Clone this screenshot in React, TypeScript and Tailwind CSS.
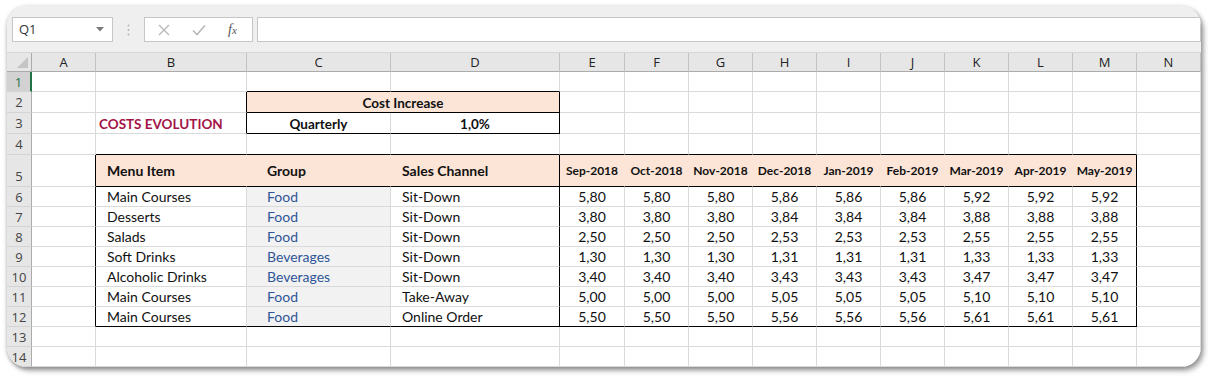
import React from 'react';

const months = ['Sep-2018', 'Oct-2018', 'Nov-2018', 'Dec-2018', 'Jan-2019', 'Feb-2019', 'Mar-2019', 'Apr-2019', 'May-2019'];

const rows: [string, string, string, string[]][] = [
  ['Main Courses', 'Food', 'Sit-Down', ['5,80', '5,80', '5,80', '5,86', '5,86', '5,86', '5,92', '5,92', '5,92']],
  ['Desserts', 'Food', 'Sit-Down', ['3,80', '3,80', '3,80', '3,84', '3,84', '3,84', '3,88', '3,88', '3,88']],
  ['Salads', 'Food', 'Sit-Down', ['2,50', '2,50', '2,50', '2,53', '2,53', '2,53', '2,55', '2,55', '2,55']],
  ['Soft Drinks', 'Beverages', 'Sit-Down', ['1,30', '1,30', '1,30', '1,31', '1,31', '1,31', '1,33', '1,33', '1,33']],
  ['Alcoholic Drinks', 'Beverages', 'Sit-Down', ['3,40', '3,40', '3,40', '3,43', '3,43', '3,43', '3,47', '3,47', '3,47']],
  ['Main Courses', 'Food', 'Take-Away', ['5,00', '5,00', '5,00', '5,05', '5,05', '5,05', '5,10', '5,10', '5,10']],
  ['Main Courses', 'Food', 'Online Order', ['5,50', '5,50', '5,50', '5,56', '5,56', '5,56', '5,61', '5,61', '5,61']],
];

const letters = ['A', 'B', 'C', 'D', 'E', 'F', 'G', 'H', 'I', 'J', 'K', 'L', 'M', 'N'];

// a single sheet cell; border colours are passed in full so they never clash
const Cell: React.FC<{ r?: string; b?: string; className?: string; children?: React.ReactNode }> = ({
  r = 'border-r-[#dadada]',
  b = 'border-b-[#dadada]',
  className = '',
  children,
}) => (
  <div className={`min-h-0 leading-[16px] pt-[1px] border-r border-b ${r} ${b} flex items-center overflow-hidden whitespace-nowrap ${className}`}>
    {children}
  </div>
);

const RowHead: React.FC<{ n: number; active?: boolean; bottom?: boolean }> = ({ n, active, bottom }) => (
  <div
    className={`min-h-0 leading-[16px] flex justify-center border-b border-b-[#d4d4d4] font-['Open_Sans',sans-serif] text-[13px] ${
      active ? 'bg-[#d2d2d2] text-[#217346] border-r-2 border-r-[#217346]' : 'bg-[#e6e6e6] text-[#444] border-r border-r-[#ababab]'
    } ${bottom ? 'items-end pb-[2px]' : 'items-center'}`}
  >
    {n}
  </div>
);

export default function App() {
  return (
    <div className="w-[1208px] h-[376px] bg-white pt-[6px] pl-[7px] font-['Lato',sans-serif] text-[14px] text-[#111]">
      <div className="w-[1194px] h-[361px] rounded-[20px] overflow-hidden bg-white shadow-[0_1px_4px_rgba(0,0,0,0.3),3px_4px_5px_rgba(0,0,0,0.3)]">
        {/* Formula bar */}
        <div className="h-[47px] bg-[#efefef] border-b border-[#d6d6d6] flex items-start pt-[11px] pl-[5px]">
          <div className="w-[101px] h-[25px] bg-white border border-[#c6c6c6] flex items-center justify-between pl-[6px] pr-[8px] font-['Open_Sans',sans-serif] text-[13px] text-[#333]">
            <span>Q1</span>
            <svg width="8" height="5" viewBox="0 0 8 5">
              <path d="M0 0 L8 0 L4 4.5 Z" fill="#7a7a7a" />
            </svg>
          </div>
          <div className="w-[31px] h-[25px] flex items-center justify-center">
            <svg width="3" height="12" viewBox="0 0 3 12">
              <circle cx="1.5" cy="1.5" r="1" fill="#b5b5b5" />
              <circle cx="1.5" cy="6" r="1" fill="#b5b5b5" />
              <circle cx="1.5" cy="10.5" r="1" fill="#b5b5b5" />
            </svg>
          </div>
          <div className="w-[109px] h-[25px] bg-white border border-[#c6c6c6] flex items-center pl-[13px] gap-[22px]">
            <svg width="12" height="12" viewBox="0 0 12 12">
              <path d="M1 1 L11 11 M11 1 L1 11" stroke="#b8b8b8" strokeWidth="1.4" />
            </svg>
            <svg width="14" height="12" viewBox="0 0 14 12">
              <path d="M1 6.5 L5 10.5 L13 1.5" stroke="#b8b8b8" strokeWidth="1.6" fill="none" />
            </svg>
            <span className="font-['Liberation_Serif',serif] italic text-[14px] text-[#555] leading-none">
              f<span className="text-[11px]">x</span>
            </span>
          </div>
          <div className="flex-1 h-[25px] ml-[4px] bg-white border border-[#c6c6c6]" />
        </div>

        {/* Sheet grid */}
        <div className="grid grid-cols-[25px_64px_151px_144px_169px_65px_64px_64px_64px_64px_64px_64px_64px_64px_64px] grid-rows-[19px_20px_21px_21px_21px_32px_20px_20px_20px_20px_20px_20px_20px_20px_20px]">
          {/* column headers */}
          <div className="min-h-0 bg-[#e6e6e6] border-r border-b border-r-[#ababab] border-b-[#ababab] flex items-end justify-end pr-[3px] pb-[3px]">
            <svg width="11" height="11" viewBox="0 0 11 11">
              <path d="M11 0 L11 11 L0 11 Z" fill="#c4c4c4" />
            </svg>
          </div>
          {letters.map((l) => (
            <div
              key={l}
              className="min-h-0 bg-[#e6e6e6] border-r border-b border-r-[#c2c2c2] border-b-[#ababab] flex items-center justify-center font-['Open_Sans',sans-serif] text-[13px] leading-[16px] text-[#222]"
            >
              {l}
            </div>
          ))}

          {/* row 1 */}
          <RowHead n={1} active />
          {letters.map((l) => (
            <Cell key={l} b={l === 'C' || l === 'D' ? 'border-b-black' : 'border-b-[#dadada]'} />
          ))}

          {/* row 2 */}
          <RowHead n={2} />
          <Cell />
          <Cell r="border-r-black" />
          <Cell r="border-r-black" b="border-b-black" className="col-span-2 justify-center bg-[#fce4d6] font-bold text-[13.5px]">
            Cost Increase
          </Cell>
          {letters.slice(4).map((l) => (
            <Cell key={l} />
          ))}

          {/* row 3 */}
          <RowHead n={3} />
          <Cell />
          <Cell r="border-r-black" className="pl-[3px] font-bold text-[#a31347] text-[13.5px]">
            COSTS EVOLUTION
          </Cell>
          <Cell b="border-b-black" className="justify-center font-bold text-[13.5px]">
            Quarterly
          </Cell>
          <Cell r="border-r-black" b="border-b-black" className="justify-center font-bold text-[13.5px]">
            1,0%
          </Cell>
          {letters.slice(4).map((l) => (
            <Cell key={l} />
          ))}

          {/* row 4 */}
          <RowHead n={4} />
          {letters.map((l) => (
            <Cell key={l} b={l === 'A' || l === 'N' ? 'border-b-[#dadada]' : 'border-b-black'} />
          ))}

          {/* row 5 - table header */}
          <RowHead n={5} bottom />
          <Cell r="border-r-black" />
          <Cell r="border-r-[#fce4d6]" b="border-b-black" className="bg-[#fce4d6] pl-[11px] font-bold">
            Menu Item
          </Cell>
          <Cell r="border-r-[#fce4d6]" b="border-b-black" className="bg-[#fce4d6] pl-[20px] font-bold">
            Group
          </Cell>
          <Cell r="border-r-black" b="border-b-black" className="bg-[#fce4d6] pl-[11px] font-bold">
            Sales Channel
          </Cell>
          {months.map((m, i) => (
            <Cell
              key={m}
              r={i === months.length - 1 ? 'border-r-black' : 'border-r-[#fce4d6]'}
              b="border-b-black"
              className="bg-[#fce4d6] justify-center font-bold text-[12px]"
            >
              {m}
            </Cell>
          ))}
          <Cell />

          {/* rows 6-12 - table body */}
          {rows.map(([item, group, channel, vals], ri) => {
            const last = ri === rows.length - 1;
            const bb = last ? 'border-b-black' : 'border-b-[#dadada]';
            return (
              <React.Fragment key={ri}>
                <RowHead n={ri + 6} />
                <Cell r="border-r-black" />
                <Cell b={bb} className="pl-[11px]">
                  {item}
                </Cell>
                <Cell b={bb} className="pl-[20px] bg-[#f2f2f2] text-[#2e5597]">
                  {group}
                </Cell>
                <Cell r="border-r-black" b={bb} className="pl-[11px]">
                  {channel}
                </Cell>
                {vals.map((v, vi) => (
                  <Cell key={vi} r={vi === vals.length - 1 ? 'border-r-black' : 'border-r-[#dadada]'} b={bb} className="justify-center">
                    {v}
                  </Cell>
                ))}
                <Cell />
              </React.Fragment>
            );
          })}

          {/* rows 13-14 */}
          {[13, 14].map((n) => (
            <React.Fragment key={n}>
              <RowHead n={n} />
              {letters.map((l) => (
                <Cell key={l} />
              ))}
            </React.Fragment>
          ))}
        </div>
      </div>
    </div>
  );
}
